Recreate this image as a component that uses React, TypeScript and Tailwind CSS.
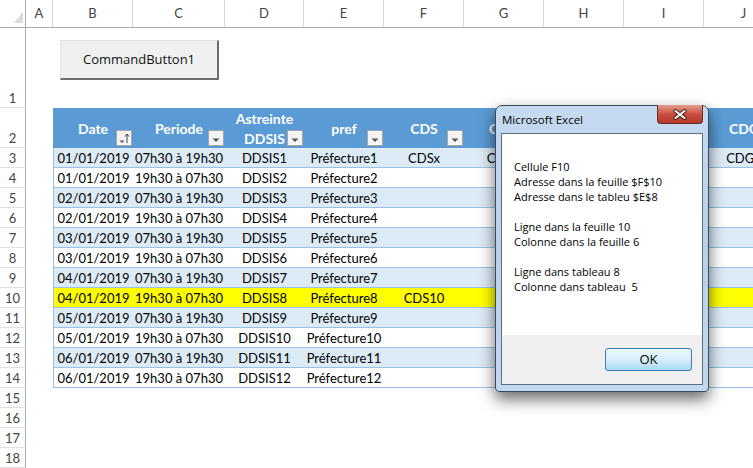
import React from "react";

type Col = { letter: string; w: string };

const cols: Col[] = [
  { letter: "A", w: "w-[27px]" },
  { letter: "B", w: "w-[80px]" },
  { letter: "C", w: "w-[92px]" },
  { letter: "D", w: "w-[79px]" },
  { letter: "E", w: "w-[80px]" },
  { letter: "F", w: "w-[80px]" },
  { letter: "G", w: "w-[80px]" },
  { letter: "H", w: "w-[80px]" },
  { letter: "I", w: "w-[80px]" },
  { letter: "J", w: "w-[80px]" },
];

const headers = ["Date", "Periode", "Astreinte|DDSIS", "pref", "CDS", "CDG", "", "", "CDG"];

const rows: string[][] = [
  ["01/01/2019", "07h30 à 19h30", "DDSIS1", "Préfecture1", "CDSx", "CDGx", "", "", "CDG1"],
  ["01/01/2019", "19h30 à 07h30", "DDSIS2", "Préfecture2"],
  ["02/01/2019", "07h30 à 19h30", "DDSIS3", "Préfecture3"],
  ["02/01/2019", "19h30 à 07h30", "DDSIS4", "Préfecture4"],
  ["03/01/2019", "07h30 à 19h30", "DDSIS5", "Préfecture5"],
  ["03/01/2019", "19h30 à 07h30", "DDSIS6", "Préfecture6"],
  ["04/01/2019", "07h30 à 19h30", "DDSIS7", "Préfecture7"],
  ["04/01/2019", "19h30 à 07h30", "DDSIS8", "Préfecture8", "CDS10"],
  ["05/01/2019", "07h30 à 19h30", "DDSIS9", "Préfecture9"],
  ["05/01/2019", "19h30 à 07h30", "DDSIS10", "Préfecture10"],
  ["06/01/2019", "07h30 à 19h30", "DDSIS11", "Préfecture11"],
  ["06/01/2019", "19h30 à 07h30", "DDSIS12", "Préfecture12"],
];

const message = [
  "Cellule F10",
  "Adresse dans la feuille $F$10",
  "Adresse dans le tableu $E$8",
  "",
  "Ligne dans la feuille 10",
  "Colonne dans la feuille 6",
  "",
  "Ligne dans tableau 8",
  "Colonne dans tableau  5",
];

const RowHead = ({ n, h }: { n?: number; h: string }) => (
  <div
    className={`${h} flex w-[26px] shrink-0 items-end justify-center border-r border-b border-r-[#ABABAB] border-b-[#E1E1E1] text-[13px] leading-[18px] text-[#444]`}
  >
    {n}
  </div>
);

const FilterBtn = ({ sorted }: { sorted?: boolean }) => (
  <div className="absolute right-[1px] bottom-[2px] flex h-[16px] w-[16px] items-center justify-center border border-[#A6A6A6] bg-[#F4F4F4]">
    {sorted ? (
      <svg width="14" height="14" viewBox="0 0 14 14">
        <path d="M2.5 9.5h5l-2.5 2.5z" fill="#555" />
        <path d="M10 12V3" stroke="#444" strokeWidth="1" />
        <path d="M8 5.5l2-2.5 2 2.5" stroke="#444" strokeWidth="1" fill="none" />
      </svg>
    ) : (
      <svg width="14" height="14" viewBox="0 0 14 14">
        <path d="M3.5 7.5h7l-3.5 3.5z" fill="#555" />
      </svg>
    )}
  </div>
);

export default function App() {
  return (
    <div className="relative h-[468px] w-[753px] overflow-hidden bg-white font-['Lato',sans-serif] text-black">
      {/* column letters */}
      <div className="flex h-[28px] border-b border-[#ABABAB]">
        <div className="relative w-[26px] shrink-0 border-r border-[#ABABAB]">
          <svg className="absolute top-[12px] left-[14px]" width="9" height="11" viewBox="0 0 9 11">
            <path d="M9 0v11H0z" fill="#DADADA" />
          </svg>
        </div>
        {cols.map((c) => (
          <div
            key={c.letter}
            className={`${c.w} flex shrink-0 items-center justify-center border-r border-[#D4D4D4] pt-[1px] text-[13px] text-[#444]`}
          >
            {c.letter}
          </div>
        ))}
      </div>

      {/* row 1 with the command button */}
      <div className="flex h-[80px]">
        <RowHead n={1} h="h-[80px]" />
        <div className="pt-[12px] pl-[34px]">
          <div className="flex h-[40px] w-[159px] items-center justify-center border border-t-[#E3E3E3] border-l-[#E3E3E3] border-r-2 border-b-2 border-r-[#6E6E6E] border-b-[#6E6E6E] bg-[#F0F0F0] font-['Open_Sans',sans-serif] text-[13px] text-[#111]">
            CommandButton1
          </div>
        </div>
      </div>

      {/* row 2 : table header */}
      <div className="flex h-[40px]">
        <RowHead n={2} h="h-[40px]" />
        <div className={`${cols[0].w} shrink-0`} />
        {headers.map((t, i) => (
          <div
            key={i}
            className={`${cols[i + 1].w} relative flex shrink-0 flex-col items-center justify-center bg-[#5B9BD5] pt-[1px] text-[14px] leading-[20px] font-bold text-white`}
          >
            {t.split("|").map((p) => (
              <span key={p}>{p}</span>
            ))}
            <FilterBtn sorted={i === 0} />
          </div>
        ))}
      </div>

      {/* data rows */}
      {Array.from({ length: 16 }).map((_, r) => {
        const data = rows[r];
        const n = r + 3;
        return (
          <div key={n} className="flex h-[20px]">
            <RowHead n={n} h="h-[20px]" />
            <div className={`${cols[0].w} shrink-0`} />
            {data &&
              cols.slice(1).map((c, i) => (
                <div
                  key={c.letter}
                  className={`${c.w} flex shrink-0 items-end justify-center border-b border-[#9BC2E6] text-[13px] leading-[18px] ${
                    i === 0 ? "border-l" : ""
                  } ${n === 10 ? "bg-[#FFFF00]" : n % 2 === 1 ? "bg-[#DDEBF7]" : "bg-white"}`}
                >
                  {data[i] ?? ""}
                </div>
              ))}
          </div>
        );
      })}

      {/* message box */}
      <div className="absolute top-[105px] left-[495px] flex h-[287px] w-[214px] flex-col rounded-t-[7px] rounded-b-[4px] border border-[#3B4B5E] bg-gradient-to-b from-[#C6DAF0] via-[#B9D0EA] to-[#C2D8EF] px-[5px] pb-[6px] shadow-[0_7px_16px_rgba(0,0,0,0.6)]">
        <div className="relative flex h-[27px] shrink-0 items-center pl-[1px] font-['Open_Sans',sans-serif] text-[11.5px] text-black">
          <span>Microsoft Excel</span>
          <div className="absolute top-[-1px] right-0 flex h-[19px] w-[46px] items-center justify-center rounded-b-[4px] border border-t-0 border-[#6B2A22] bg-gradient-to-b from-[#E39E8E] via-[#C9503F] to-[#B8382A]">
            <svg width="14" height="11" viewBox="0 0 14 11">
              <path d="M2.5 2l9 7M11.5 2l-9 7" stroke="#3A1A16" strokeWidth="4" strokeLinecap="round" />
              <path d="M2.5 2l9 7M11.5 2l-9 7" stroke="#fff" strokeWidth="2.2" strokeLinecap="round" />
            </svg>
          </div>
        </div>
        <div className="flex flex-1 flex-col border border-[#5C6D80] font-['Open_Sans',sans-serif] text-[11px] text-black">
          <div className="flex-1 bg-white pt-[25px] pl-[12px] leading-[15px]">
            {message.map((m, i) =>
              m ? <div key={i} className="whitespace-pre">{m}</div> : <div key={i} className="h-[15px]" />
            )}
          </div>
          <div className="flex h-[49px] justify-end bg-[#F0F0F0] pt-[13px] pr-[10px]">
            <div className="flex h-[23px] w-[87px] items-center justify-center rounded-[3px] border border-[#3C7FB1] bg-gradient-to-b from-[#EAF6FD] via-[#D9F0FC] to-[#A7D9F5] text-[13px]">
              OK
            </div>
          </div>
        </div>
      </div>
    </div>
  );
}
